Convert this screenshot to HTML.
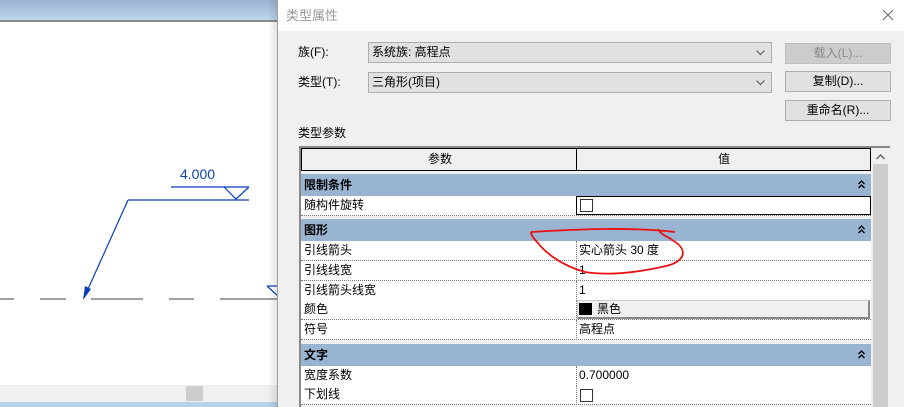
<!DOCTYPE html>
<html><head><meta charset="utf-8"><style>
*{margin:0;padding:0;box-sizing:border-box}
body{width:904px;height:407px;overflow:hidden;position:relative;background:#fff;font-family:"Liberation Sans","Noto Sans CJK SC",sans-serif;font-size:12px;color:#000}
.a{position:absolute}
.t{position:absolute;line-height:20px;white-space:nowrap}
.grp{position:absolute;left:301px;width:570px;height:22px;background:#98b4d0;font-weight:bold;line-height:22px;padding-left:3px}
.grp svg{position:absolute;right:6px;top:6px}
.row{position:absolute;left:301px;width:570px;height:20px;background:#fff;border-bottom:1px dotted #777;line-height:19px}
.row .k{position:absolute;left:3px}
.row .v{position:absolute;left:278px}
.row .d{position:absolute;left:275px;top:0;height:20px;border-left:1px dotted #777}
.btn{position:absolute;left:785px;width:106px;height:21px;border:1px solid #adadad;background:#e1e1e1;text-align:center;line-height:19px}
.cb{position:absolute;width:13px;height:13px;border:1px solid #333;background:#fff}
.dd{position:absolute;right:6px;top:7px}
</style></head><body>
<div class="a" style="left:0;top:0;width:278px;height:20px;background:linear-gradient(#9ab4d0,#bfd6ee)"></div>
<div class="a" style="left:0;top:20px;width:278px;height:2px;background:#8a8a8a"></div>
<svg class="a" style="left:0;top:0" width="278" height="407">
<text x="180" y="179" fill="#1040b0" font-size="14" font-family="Liberation Sans">4.000</text>
<g stroke="#0a3cb8" stroke-width="1.2" fill="none">
<line x1="171" y1="187" x2="249" y2="187"/>
<line x1="128" y1="200" x2="249" y2="200"/>
<polyline points="224,187 236,199 249,187"/>
<line x1="128" y1="200" x2="84" y2="298"/>
<polyline points="267,286 278,286"/><line x1="267" y1="286" x2="278" y2="296"/>
</g>
<polygon points="83,300 85,286 91,289" fill="#0a3cb8"/>
<g stroke="#808080" stroke-width="1.5">
<line x1="0" y1="299" x2="14" y2="299"/><line x1="40" y1="299" x2="66" y2="299"/>
<line x1="91" y1="299" x2="143" y2="299"/><line x1="169" y1="299" x2="194" y2="299"/>
<line x1="220" y1="299" x2="278" y2="299"/></g>
</svg>
<div class="a" style="left:0;top:385px;width:278px;height:17px;background:#f0f0f0"></div>
<div class="a" style="left:186px;top:386px;width:17px;height:15px;background:#cdcdcd"></div>
<div class="a" style="left:0;top:402px;width:278px;height:5px;background:#b7d0ea"></div>
<div class="a" style="left:268px;top:0;width:10px;height:407px;background:linear-gradient(90deg,rgba(0,0,0,0),rgba(0,0,0,.12))"></div>
<div class="a" style="left:277px;top:0;width:627px;height:407px;background:#f0f0f0;border-left:1px solid #a0a0a0"></div>
<div class="a" style="left:278px;top:0;width:626px;height:31px;background:#fff"></div>
<div class="t" style="left:286px;top:6px;color:#999;font-size:13px">类型属性</div>
<svg class="a" style="left:882px;top:9px" width="12" height="12"><path d="M1,1L11,11M11,1L1,11" stroke="#666" stroke-width="1"/></svg>
<div class="t" style="left:298px;top:42px">族(F):</div>
<div class="t" style="left:298px;top:72px">类型(T):</div>
<div class="a" style="left:368px;top:42px;width:404px;height:21px;border:1px solid #adadad;background:#e1e1e1;line-height:19px;padding-left:3px">系统族: 高程点<svg class="dd" width="9" height="6"><path d="M0.5,0.5L4.5,4.5L8.5,0.5" stroke="#555" fill="none"/></svg></div>
<div class="a" style="left:368px;top:72px;width:404px;height:21px;border:1px solid #adadad;background:#e1e1e1;line-height:19px;padding-left:3px">三角形(项目)<svg class="dd" width="9" height="6"><path d="M0.5,0.5L4.5,4.5L8.5,0.5" stroke="#555" fill="none"/></svg></div>
<div class="btn" style="top:43px;background:#ccc;border-color:#bfbfbf;color:#888">载入(L)...</div>
<div class="btn" style="top:71px">复制(D)...</div>
<div class="btn" style="top:100px">重命名(R)...</div>
<div class="t" style="left:298px;top:123px">类型参数</div>
<div class="a" style="left:299px;top:146px;width:591px;height:261px;background:#f0f0f0;border-top:2px solid #888;border-left:2px solid #888"></div>
<div class="a" style="left:301px;top:148px;width:570px;height:23px;background:#f0f0f0;border:1px solid #000"></div>
<div class="a" style="left:576px;top:148px;width:1px;height:23px;background:#000"></div>
<div class="t" style="left:428px;top:149px">参数</div>
<div class="t" style="left:718px;top:149px">值</div>
<div class="a" style="left:872px;top:148px;width:17px;height:259px;background:#f0f0f0"></div>
<div class="a" style="left:873px;top:164px;width:15px;height:243px;background:#cdcdcd"></div>
<svg class="a" style="left:876px;top:154px" width="9" height="6"><path d="M0.5,5L4.5,1L8.5,5" stroke="#666" stroke-width="1.5" fill="none"/></svg>
<div class="grp" style="top:174px">限制条件<svg width="7" height="9"><path d="M0.5,4L3.5,1L6.5,4M0.5,8L3.5,5L6.5,8" stroke="#000" stroke-width="1.3" fill="none"/></svg></div>
<div class="row" style="top:196px"><span class="k">随构件旋转</span><span class="d"></span></div>
<div class="a" style="left:576px;top:196px;width:295px;height:19px;border:1px solid #000;background:#fff"></div>
<div class="cb" style="left:580px;top:199px"></div>
<div class="grp" style="top:219px">图形<svg width="7" height="9"><path d="M0.5,4L3.5,1L6.5,4M0.5,8L3.5,5L6.5,8" stroke="#000" stroke-width="1.3" fill="none"/></svg></div>
<div class="row" style="top:241px"><span class="k">引线箭头</span><span class="d"></span><span class="v">实心箭头 30 度</span></div>
<div class="row" style="top:261px"><span class="k">引线线宽</span><span class="d"></span><span class="v">1</span></div>
<div class="row" style="top:281px"><span class="k">引线箭头线宽</span><span class="d"></span><span class="v">1</span></div>
<div class="row" style="top:300px"><span class="k">颜色</span><span class="d"></span></div>
<div class="a" style="left:577px;top:300px;width:293px;height:19px;background:#f0f0f0;border:1px solid #ccc;border-right:2px solid #888;border-bottom:2px solid #888;line-height:17px;padding-left:19px">黑色</div>
<div class="a" style="left:579px;top:303px;width:13px;height:12px;background:#000"></div>
<div class="row" style="top:320px"><span class="k">符号</span><span class="d"></span><span class="v">高程点</span></div>
<div class="grp" style="top:344px">文字<svg width="7" height="9"><path d="M0.5,4L3.5,1L6.5,4M0.5,8L3.5,5L6.5,8" stroke="#000" stroke-width="1.3" fill="none"/></svg></div>
<div class="row" style="top:366px"><span class="k">宽度系数</span><span class="d"></span><span class="v">0.700000</span></div>
<div class="row" style="top:385px"><span class="k">下划线</span><span class="d"></span></div>
<div class="cb" style="left:580px;top:389px"></div>
<svg class="a" style="left:0;top:0" width="904" height="407">
<path d="M531,232 C580,229 630,227 675,232 M658,229 C662,236 668,236 672,240 C690,250 684,262 666,266 C640,272 610,276 585,272 C560,265 545,252 538,243 C533,238 531,235 531,232" stroke="#e81010" stroke-width="1.8" fill="none"/>
</svg>
</body></html>
